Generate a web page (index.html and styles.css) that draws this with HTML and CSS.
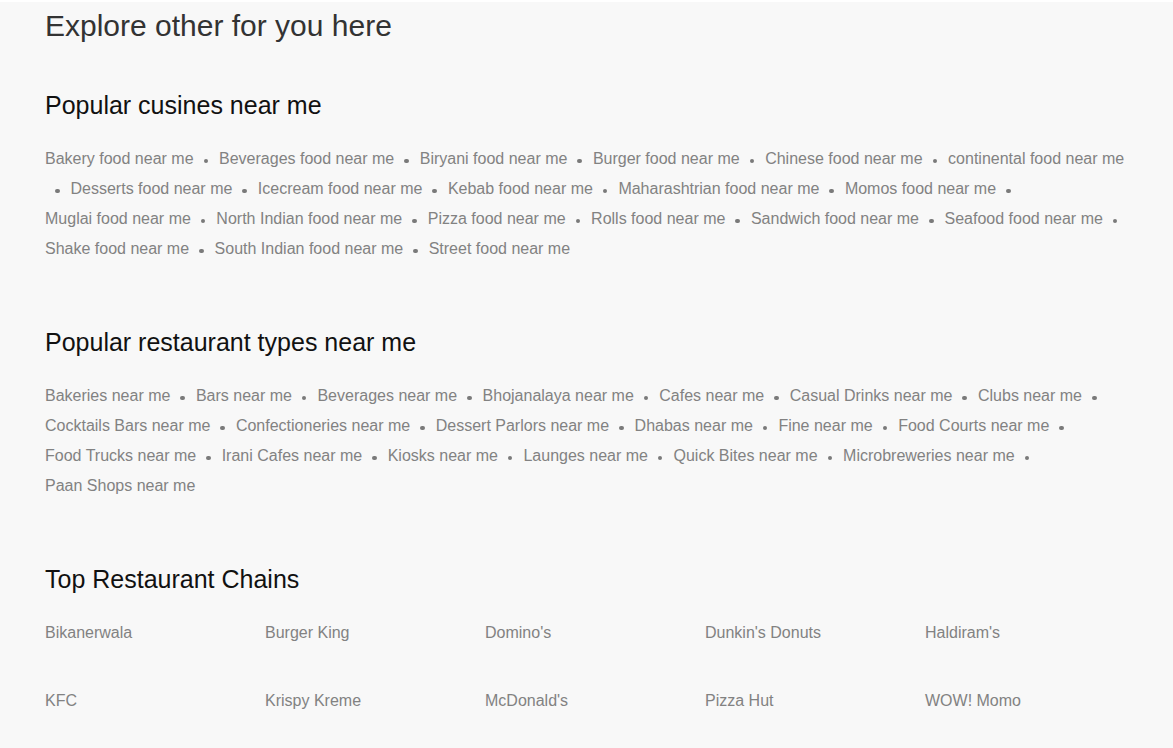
FILE: index.html
```html
<!DOCTYPE html>
<html lang="en">
<head>
<meta charset="utf-8">
<title>Explore other for you here</title>
<link rel="stylesheet" href="styles.css">
</head>
<body>
<main class="page">
  <h1 class="title">Explore other for you here</h1>

  <section class="block">
    <h2 class="block-title">Popular cusines near me</h2>
    <div class="links">
      <a class="link">Bakery food near me</a><span class="dot"></span>
      <a class="link">Beverages food near me</a><span class="dot"></span>
      <a class="link">Biryani food near me</a><span class="dot"></span>
      <a class="link">Burger food near me</a><span class="dot"></span>
      <a class="link">Chinese food near me</a><span class="dot"></span>
      <a class="link">continental food near me</a><span class="dot"></span>
      <a class="link">Desserts food near me</a><span class="dot"></span>
      <a class="link">Icecream food near me</a><span class="dot"></span>
      <a class="link">Kebab food near me</a><span class="dot"></span>
      <a class="link">Maharashtrian food near me</a><span class="dot"></span>
      <a class="link">Momos food near me</a><span class="dot"></span>
      <a class="link">Muglai food near me</a><span class="dot"></span>
      <a class="link">North Indian food near me</a><span class="dot"></span>
      <a class="link">Pizza food near me</a><span class="dot"></span>
      <a class="link">Rolls food near me</a><span class="dot"></span>
      <a class="link">Sandwich food near me</a><span class="dot"></span>
      <a class="link">Seafood food near me</a><span class="dot"></span>
      <a class="link">Shake food near me</a><span class="dot"></span>
      <a class="link">South Indian food near me</a><span class="dot"></span>
      <a class="link">Street food near me</a>
    </div>
  </section>

  <section class="block">
    <h2 class="block-title">Popular restaurant types near me</h2>
    <div class="links">
      <a class="link">Bakeries near me</a><span class="dot"></span>
      <a class="link">Bars near me</a><span class="dot"></span>
      <a class="link">Beverages near me</a><span class="dot"></span>
      <a class="link">Bhojanalaya near me</a><span class="dot"></span>
      <a class="link">Cafes near me</a><span class="dot"></span>
      <a class="link">Casual Drinks near me</a><span class="dot"></span>
      <a class="link">Clubs near me</a><span class="dot"></span>
      <a class="link">Cocktails Bars near me</a><span class="dot"></span>
      <a class="link">Confectioneries near me</a><span class="dot"></span>
      <a class="link">Dessert Parlors near me</a><span class="dot"></span>
      <a class="link">Dhabas near me</a><span class="dot"></span>
      <a class="link">Fine near me</a><span class="dot"></span>
      <a class="link">Food Courts near me</a><span class="dot"></span>
      <a class="link">Food Trucks near me</a><span class="dot"></span>
      <a class="link">Irani Cafes near me</a><span class="dot"></span>
      <a class="link">Kiosks near me</a><span class="dot"></span>
      <a class="link">Launges near me</a><span class="dot"></span>
      <a class="link">Quick Bites near me</a><span class="dot"></span>
      <a class="link">Microbreweries near me</a><span class="dot"></span>
      <a class="link">Paan Shops near me</a>
    </div>
  </section>

  <section class="block">
    <h2 class="block-title">Top Restaurant Chains</h2>
    <div class="chains">
      <a class="chain">Bikanerwala</a>
      <a class="chain">Burger King</a>
      <a class="chain">Domino's</a>
      <a class="chain">Dunkin's Donuts</a>
      <a class="chain">Haldiram's</a>
      <a class="chain">KFC</a>
      <a class="chain">Krispy Kreme</a>
      <a class="chain">McDonald's</a>
      <a class="chain">Pizza Hut</a>
      <a class="chain">WOW! Momo</a>
    </div>
  </section>
</main>
</body>
</html>
```

FILE: styles.css
```css
* {
  box-sizing: border-box;
}

html, body {
  margin: 0;
  padding: 0;
}

body {
  background: #f8f8f8;
  border-top: 2px solid #ffffff;
  font-family: "Liberation Sans", Arial, sans-serif;
  min-height: 748px;
}

.page {
  margin: 0 39px 0 45px;
  padding-bottom: 40px;
}

.title {
  margin: 6px 0 0;
  font-size: 30px;
  line-height: 36px;
  font-weight: 400;
  color: #333333;
}

.block {
  margin-top: 63px;
}

.block:first-of-type {
  margin-top: 46px;
}

.block-title {
  margin: 0 0 24px;
  font-size: 25px;
  line-height: 30px;
  font-weight: 400;
  color: #111111;
}

.links {
  display: flex;
  flex-wrap: wrap;
  align-items: center;
}

.link {
  font-size: 16px;
  line-height: 30px;
  color: #828282;
  white-space: nowrap;
  text-decoration: none;
  cursor: pointer;
}

.dot {
  width: 4.5px;
  height: 4.5px;
  margin: 4px 11px 0 10px;
  border-radius: 50%;
  background: #7a7a7a;
}

.chains {
  display: grid;
  grid-template-columns: repeat(5, 220px);
  row-gap: 38px;
}

.chain {
  font-size: 16px;
  line-height: 30px;
  color: #828282;
  text-decoration: none;
  cursor: pointer;
}
```
